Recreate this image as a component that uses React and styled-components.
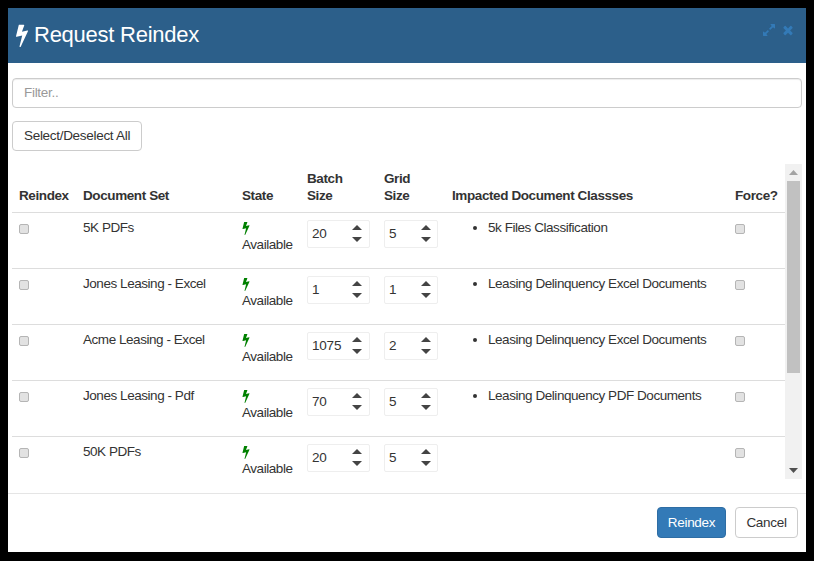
import styled, { createGlobalStyle } from 'styled-components';

const BOLT = 'M1333 566q18 20 7 44l-540 1157q-13 25-42 25-4 0-14-2-17-5-25.5-19t-4.5-30l197-808-406 101q-4 1-12 1-18 0-31-11-18-15-13-39l201-825q4-14 16-23t28-9h328q19 0 32 12.5t13 29.5q0 8-5 18l-171 463 396-98q8-2 12-2 19 0 34 15z';
const EXPAND = 'M883 1056q0 13-10 23l-332 332 144 144q19 19 19 45t-19 45-45 19h-448q-26 0-45-19t-19-45v-448q0-26 19-45t45-19 45 19l144 144 332-332q10-10 23-10t23 10l114 114q10 10 10 23zm781-864v448q0 26-19 45t-45 19-45-19l-144-144-332 332q-10 10-23 10t-23-10l-114-114q-10-10-10-23t10-23l332-332-144-144q-19-19-19-45t19-45 45-19h448q26 0 45 19t19 45z';
const CLOSE = 'M1490 1322q0 40-28 68l-136 136q-28 28-68 28t-68-28l-294-294-294 294q-28 28-68 28t-68-28l-136-136q-28-28-28-68t28-68l294-294-294-294q-28-28-28-68t28-68l136-136q28-28 68-28t68 28l294 294 294-294q28-28 68-28t68 28l136 136q28 28 28 68t-28 68l-294 294 294 294q28 28 28 68z';

const rows = [
  { name: '5K PDFs', batch: '20', grid: '5', classes: ['5k Files Classification'] },
  { name: 'Jones Leasing - Excel', batch: '1', grid: '1', classes: ['Leasing Delinquency Excel Documents'] },
  { name: 'Acme Leasing - Excel', batch: '1075', grid: '2', classes: ['Leasing Delinquency Excel Documents'] },
  { name: 'Jones Leasing - Pdf', batch: '70', grid: '5', classes: ['Leasing Delinquency PDF Documents'] },
  { name: '50K PDFs', batch: '20', grid: '5', classes: [] },
];

function Icon({ d, size, color }) {
  return (
    <svg width={size} height={size} viewBox="0 0 1792 1792" fill={color} style={{ display: 'block', flex: 'none' }}>
      <path d={d} />
    </svg>
  );
}

function NumberField({ value, wide }) {
  return (
    <Field $wide={wide}>
      <FieldInput defaultValue={value} />
      <Spinner>
        <svg width="10" height="5" viewBox="0 0 10 5" style={{ display: 'block' }}><path d="M5 0l5 5H0z" fill="#444" /></svg>
        <svg width="10" height="5" viewBox="0 0 10 5" style={{ display: 'block' }}><path d="M0 0h10L5 5z" fill="#444" /></svg>
      </Spinner>
    </Field>
  );
}

export default function App() {
  return (
    <>
      <GlobalStyle />
      <Modal>
        <Header>
          <Title>
            <TitleIcon><Icon d={BOLT} size={24} color="#fff" /></TitleIcon>
            Request Reindex
          </Title>
          <HeaderTools>
            <Icon d={EXPAND} size={14} color="#337ab7" />
            <Icon d={CLOSE} size={14} color="#337ab7" />
          </HeaderTools>
        </Header>
        <Body>
          <Filter placeholder="Filter.." />
          <SelectAll type="button">Select/Deselect All</SelectAll>
          <Scroller>
            <Viewport>
              <Table>
                <colgroup>
                  <col width="64" />
                  <col width="159" />
                  <col width="65" />
                  <col width="77" />
                  <col width="68" />
                  <col width="283" />
                  <col width="57" />
                </colgroup>
                <thead>
                  <tr>
                    <th>Reindex</th>
                    <th>Document Set</th>
                    <th>State</th>
                    <th>Batch Size</th>
                    <th>Grid Size</th>
                    <th>Impacted Document Classses</th>
                    <th>Force?</th>
                  </tr>
                </thead>
                <tbody>
                  {rows.map((row) => (
                    <tr key={row.name}>
                      <td><Check type="checkbox" /></td>
                      <td>{row.name}</td>
                      <td>
                        <StateIcon><Icon d={BOLT} size={14} color="#008000" /></StateIcon>
                        Available
                      </td>
                      <td><NumberField value={row.batch} wide /></td>
                      <td><NumberField value={row.grid} /></td>
                      <td>
                        <Classes>
                          {row.classes.map((c) => <li key={c}>{c}</li>)}
                        </Classes>
                      </td>
                      <td><Check type="checkbox" /></td>
                    </tr>
                  ))}
                </tbody>
              </Table>
            </Viewport>
            <ScrollBar>
              <ScrollArrow>
                <svg width="9" height="5" viewBox="0 0 9 5"><path d="M4.5 0L9 5H0z" fill="#a3a3a3" /></svg>
              </ScrollArrow>
              <ScrollTrack><ScrollThumb /></ScrollTrack>
              <ScrollArrow>
                <svg width="9" height="5" viewBox="0 0 9 5"><path d="M0 0h9L4.5 5z" fill="#505050" /></svg>
              </ScrollArrow>
            </ScrollBar>
          </Scroller>
        </Body>
        <Footer>
          <PrimaryButton type="button">Reindex</PrimaryButton>
          <CancelButton type="button">Cancel</CancelButton>
        </Footer>
      </Modal>
    </>
  );
}

const GlobalStyle = createGlobalStyle`
  * { box-sizing: border-box; }
  html, body {
    margin: 0;
    height: 100%;
    background: #000;
    font-family: "Liberation Sans", Arial, sans-serif;
    font-size: 13.5px;
    letter-spacing: -0.3px;
    line-height: 20px;
    color: #333;
  }
  body { padding: 8px; }
  input, button { letter-spacing: inherit; }
`;

const Modal = styled.div`
  width: 798px;
  height: 544px;
  display: flex;
  flex-direction: column;
  background: #fff;
`;

const Header = styled.header`
  height: 55px;
  flex: none;
  display: flex;
  align-items: flex-start;
  justify-content: space-between;
  background: #2c5f8a;
  padding: 14px 11px 0 2px;
`;

const Title = styled.h4`
  margin: 0;
  display: flex;
  align-items: center;
  font-size: 22px;
  letter-spacing: -0.25px;
  line-height: 26px;
  font-weight: 400;
  color: #fff;
`;

const TitleIcon = styled.span`
  display: block;
  margin-top: -1px;
`;

const HeaderTools = styled.div`
  display: flex;
  gap: 5px;
  padding-top: 1px;
`;

const Body = styled.div`
  flex: 1;
  min-height: 0;
  display: flex;
  flex-direction: column;
  align-items: flex-start;
  padding: 15px 4px 14px;
  border-bottom: 1px solid #e5e5e5;
`;

const Filter = styled.input`
  width: 100%;
  height: 30px;
  flex: none;
  padding: 0 11px 2px;
  border: 1px solid #ccc;
  border-radius: 4px;
  font: inherit;
  color: #555;
  outline: none;
  box-shadow: inset 0 1px 1px rgba(0, 0, 0, .075);
  &::placeholder { color: #999; opacity: 1; }
`;

const Button = styled.button`
  flex: none;
  padding: 0 11px;
  background: #fff;
  border: 1px solid #ccc;
  border-radius: 4px;
  font: inherit;
  color: #333;
`;

const SelectAll = styled(Button)`
  height: 30px;
  margin-top: 13px;
`;

const PrimaryButton = styled(Button)`
  width: 69px;
  height: 31px;
  padding: 0;
  background: #337ab7;
  border-color: #2e6da4;
  color: #fff;
`;

const CancelButton = styled(Button)`
  width: 63px;
  height: 31px;
  padding: 0;
`;

const Scroller = styled.div`
  width: 100%;
  flex: 1;
  min-height: 0;
  margin-top: 13px;
  display: flex;
`;

const Viewport = styled.div`
  flex: 1;
  min-width: 0;
  overflow: hidden;
`;

const ScrollBar = styled.div`
  width: 17px;
  flex: none;
  display: flex;
  flex-direction: column;
  background: #f1f1f1;
`;

const ScrollArrow = styled.div`
  height: 17px;
  flex: none;
  display: flex;
  align-items: center;
  justify-content: center;
`;

const ScrollTrack = styled.div`
  flex: 1;
`;

const ScrollThumb = styled.div`
  height: 192px;
  margin: 0 2px;
  background: #c1c1c1;
`;

const Table = styled.table`
  width: 773px;
  table-layout: fixed;
  border-collapse: collapse;

  th {
    height: 48px;
    padding: 4px 7px 8px;
    text-align: left;
    vertical-align: bottom;
    font-weight: 700;
    letter-spacing: -0.4px;
    line-height: 17px;
    border-bottom: 1px solid #ddd;
  }

  td {
    padding: 5px 7px 8px;
    vertical-align: top;
    letter-spacing: -0.45px;
    border-top: 1px solid #ddd;
    height: 56px;
  }

  tbody tr:first-child td { border-top: 0; }
`;

const Check = styled.input`
  appearance: none;
  display: block;
  width: 10px;
  height: 10px;
  margin: 6px 0 0;
  background: #e2e2e2;
  border: 1px solid #b5b5b5;
  border-radius: 2px;
`;

const StateIcon = styled.span`
  display: block;
  height: 17px;
  padding-top: 3px;
  margin-left: -3px;
`;

const Field = styled.div`
  width: ${(props) => (props.$wide ? '63px' : '54px')};
  height: 28px;
  margin-top: 2px;
  display: flex;
  align-items: center;
  justify-content: space-between;
  padding: 0 7px 0 4px;
  border: 1px solid #eee;
  border-radius: 2px;
`;

const FieldInput = styled.input`
  width: 32px;
  padding: 0;
  border: 0;
  outline: none;
  font: inherit;
  letter-spacing: -0.2px;
  color: #333;
  background: transparent;
`;

const Spinner = styled.div`
  display: flex;
  flex-direction: column;
  gap: 7px;
`;

const Classes = styled.ul`
  margin: 0;
  padding: 0 0 0 36px;
`;

const Footer = styled.footer`
  flex: none;
  display: flex;
  justify-content: flex-end;
  gap: 9px;
  padding: 13px 8px 0;
  height: 58px;
`;
